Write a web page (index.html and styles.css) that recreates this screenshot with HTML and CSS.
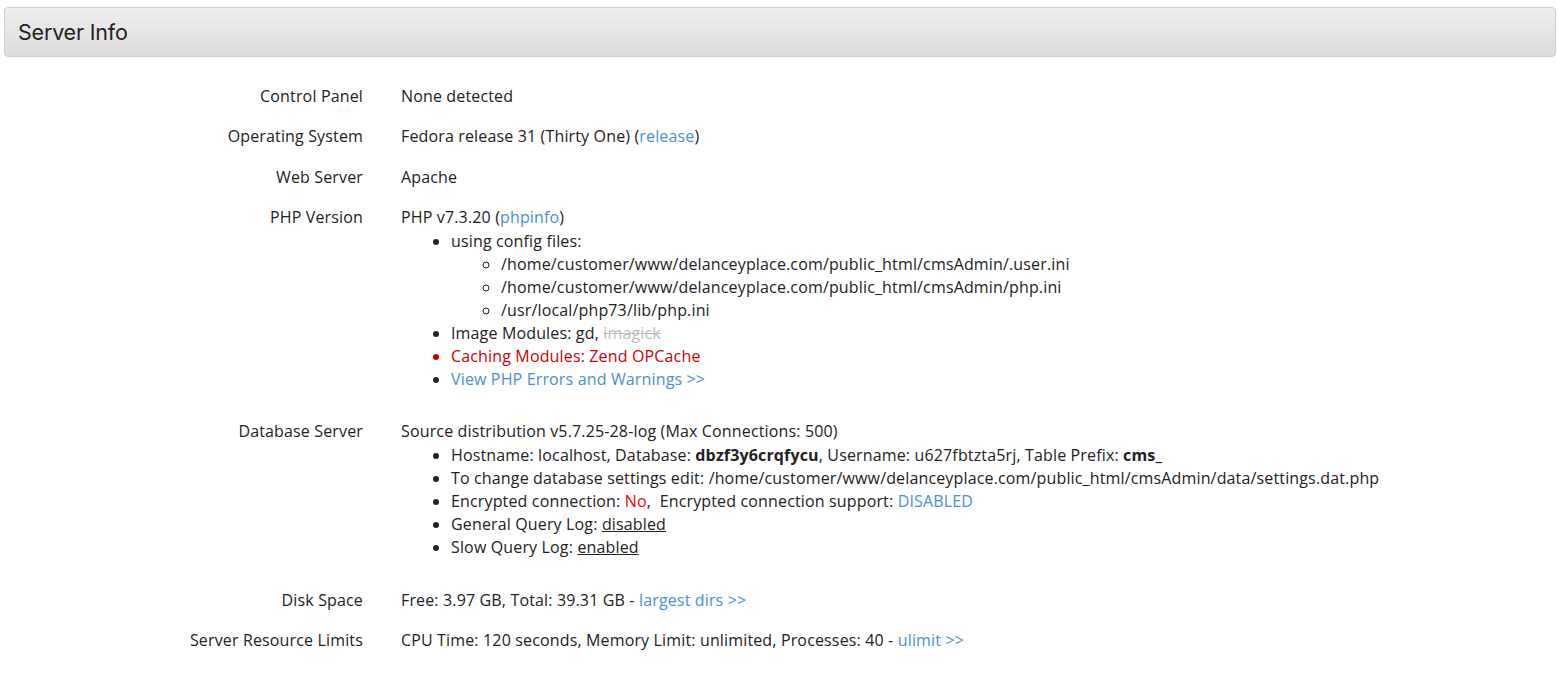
FILE: index.html
```html
<!DOCTYPE html>
<html lang="en">
<head>
<meta charset="utf-8">
<title>Server Info</title>
<link rel="stylesheet" href="styles.css">
</head>
<body>
<div class="page">
  <div class="panel-heading"><h1 class="panel-title">Server Info</h1></div>
  <div class="info">
    <div class="row">
      <div class="label">Control Panel</div>
      <div class="value">None detected</div>
    </div>
    <div class="row">
      <div class="label">Operating System</div>
      <div class="value">Fedora release 31 (Thirty One) (<a href="#">release</a>)</div>
    </div>
    <div class="row">
      <div class="label">Web Server</div>
      <div class="value">Apache</div>
    </div>
    <div class="row">
      <div class="label">PHP Version</div>
      <div class="value">PHP v7.3.20 (<a href="#">phpinfo</a>)
        <ul class="list">
          <li>using config files:
            <ul class="sublist">
              <li>/home/customer/www/delanceyplace.com/public_html/cmsAdmin/.user.ini</li>
              <li>/home/customer/www/delanceyplace.com/public_html/cmsAdmin/php.ini</li>
              <li>/usr/local/php73/lib/php.ini</li>
            </ul>
          </li>
          <li>Image Modules: gd, <span class="off">imagick</span></li>
          <li class="warn">Caching Modules: Zend OPCache</li>
          <li><a href="#">View PHP Errors and Warnings &gt;&gt;</a></li>
        </ul>
      </div>
    </div>
    <div class="row">
      <div class="label">Database Server</div>
      <div class="value">Source distribution v5.7.25-28-log (Max Connections: 500)
        <ul class="list">
          <li>Hostname: localhost, Database: <b>dbzf3y6crqfycu</b>, Username: u627fbtzta5rj, Table Prefix: <b>cms_</b></li>
          <li>To change database settings edit: /home/customer/www/delanceyplace.com/public_html/cmsAdmin/data/settings.dat.php</li>
          <li>Encrypted connection: <span class="no">No</span>,&nbsp; Encrypted connection support: <a href="#">DISABLED</a></li>
          <li>General Query Log: <span class="u">disabled</span></li>
          <li>Slow Query Log: <span class="u">enabled</span></li>
        </ul>
      </div>
    </div>
    <div class="row">
      <div class="label">Disk Space</div>
      <div class="value">Free: 3.97 GB, Total: 39.31 GB - <a href="#">largest dirs &gt;&gt;</a></div>
    </div>
    <div class="row">
      <div class="label">Server Resource Limits</div>
      <div class="value">CPU Time: 120 seconds, Memory Limit: unlimited, Processes: 40 - <a href="#">ulimit &gt;&gt;</a></div>
    </div>
  </div>
</div>
</body>
</html>
```

FILE: styles.css
```css
html, body {
  margin: 0;
  padding: 0;
  background: #fff;
}
body {
  font-family: "Open Sans", "Liberation Sans", sans-serif;
  font-size: 16px;
  line-height: 23px;
  letter-spacing: 0.15px;
  color: #222;
}
.page {
  padding: 7px 2px 0 4px;
}
.panel-heading {
  height: 48px;
  border: 1px solid #cfcfcf;
  border-radius: 4px;
  background: linear-gradient(to bottom, #eeeeee, #dcdcdc);
  display: flex;
  align-items: center;
  padding-left: 13px;
}
.panel-title {
  margin: 0;
  font-family: "Inter", "Noto Sans", sans-serif;
  font-weight: 400;
  font-size: 21.5px;
  color: #222;
  letter-spacing: -0.2px;
}
.info {
  padding-top: 28px;
}
.row {
  display: grid;
  grid-template-columns: 359px 1fr;
  column-gap: 38px;
  margin-bottom: 17.33px;
}
.label {
  text-align: right;
}
a {
  color: #4a8fd4;
  text-decoration: none;
}
.list {
  margin: 1px 0 12px 0;
  padding-left: 50px;
  list-style: disc;
}
.sublist {
  margin: 0;
  padding-left: 50px;
  list-style: circle;
}
.off {
  color: #bbb;
  text-decoration: line-through;
}
.warn {
  color: #cc0000;
}
.no {
  color: #ee0000;
}
.u {
  text-decoration: underline;
}
b {
  font-weight: 700;
}
```
